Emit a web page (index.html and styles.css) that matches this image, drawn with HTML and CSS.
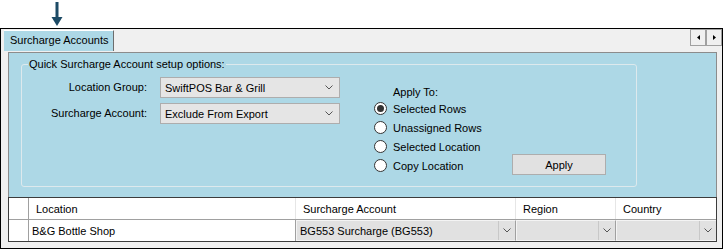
FILE: index.html
```html
<!DOCTYPE html>
<html lang="en">
<head>
    <meta charset="UTF-8">
    <meta name="viewport" content="width=device-width, initial-scale=1.0">
    <title>Surcharge Accounts</title>
    <link rel="stylesheet" href="styles.css">
</head>
<body>
    <div class="pointer">
        <svg width="14" height="28" viewBox="0 0 14 28">
            <rect x="5.5" y="2" width="3" height="17" fill="#1d4b66"/>
            <polygon points="1.5,17 12.5,17 7,26" fill="#1d4b66"/>
        </svg>
    </div>
    <div class="window">
        <div class="tabstrip">
            <div class="tab">Surcharge Accounts</div>
            <div class="scroll">
                <span class="scroll-btn"><svg width="3" height="5" viewBox="0 0 3 5"><polygon points="3,0 3,5 0,2.5" fill="#000"/></svg></span>
                <span class="scroll-btn"><svg width="3" height="5" viewBox="0 0 3 5"><polygon points="0,0 0,5 3,2.5" fill="#000"/></svg></span>
            </div>
        </div>
        <div class="page">
            <div class="panel">
                <fieldset class="options">
                    <legend>Quick Surcharge Account setup options:</legend>
                    <div class="fields">
                        <label>Location Group:</label>
                        <div class="combo"><span>SwiftPOS Bar &amp; Grill</span><svg width="8" height="5" viewBox="0 0 8 5"><polyline points="0.5,0.5 4,4 7.5,0.5" fill="none" stroke="#555"/></svg></div>
                        <label>Surcharge Account:</label>
                        <div class="combo"><span>Exclude From Export</span><svg width="8" height="5" viewBox="0 0 8 5"><polyline points="0.5,0.5 4,4 7.5,0.5" fill="none" stroke="#555"/></svg></div>
                    </div>
                    <div class="apply">
                        <div class="apply-to">
                            <div class="apply-title">Apply To:</div>
                            <div class="radio"><span class="dot on"></span>Selected Rows</div>
                            <div class="radio"><span class="dot"></span>Unassigned Rows</div>
                            <div class="radio"><span class="dot"></span>Selected Location</div>
                            <div class="radio"><span class="dot"></span>Copy Location</div>
                        </div>
                        <button class="apply-btn">Apply</button>
                    </div>
                </fieldset>
            </div>
            <div class="grid">
                <div class="grid-row grid-head">
                    <div class="cell rowhead"></div>
                    <div class="cell">Location</div>
                    <div class="cell">Surcharge Account</div>
                    <div class="cell">Region</div>
                    <div class="cell">Country</div>
                </div>
                <div class="grid-row">
                    <div class="cell rowhead"></div>
                    <div class="cell text">B&amp;G Bottle Shop</div>
                    <div class="cell pick"><span>BG553 Surcharge (BG553)</span><i class="drop"><svg width="8" height="5" viewBox="0 0 8 5"><polyline points="0.5,0.5 4,4 7.5,0.5" fill="none" stroke="#555"/></svg></i></div>
                    <div class="cell pick"><span></span><i class="drop"><svg width="8" height="5" viewBox="0 0 8 5"><polyline points="0.5,0.5 4,4 7.5,0.5" fill="none" stroke="#555"/></svg></i></div>
                    <div class="cell pick"><span></span><i class="drop"><svg width="8" height="5" viewBox="0 0 8 5"><polyline points="0.5,0.5 4,4 7.5,0.5" fill="none" stroke="#555"/></svg></i></div>
                </div>
            </div>
        </div>
    </div>
</body>
</html>
```

FILE: styles.css
```css
* {
    margin: 0;
    padding: 0;
    box-sizing: border-box;
}

body {
    font-family: "Liberation Sans", Arial, sans-serif;
    font-size: 11px;
    color: #000;
    background: #fff;
}

.pointer {
    height: 28px;
    padding-left: 50px;
}

.pointer svg {
    display: block;
}

.window {
    width: 723px;
    height: 221px;
    border: 1px solid #000;
    background: #f0f0f0;
}

.tabstrip {
    height: 23px;
    display: flex;
    justify-content: space-between;
    align-items: flex-start;
}

.tab {
    margin: 1px 0 0 3px;
    width: 110px;
    height: 21px;
    line-height: 18px;
    padding-left: 6px;
    background: #add8e6;
    border-top: 1px solid #fff;
    border-right: 1px solid #6d6d6d;
}

.scroll {
    display: flex;
}

.scroll-btn {
    width: 16px;
    height: 17px;
    border: 1px solid #a0a0a0;
    background: #f0f0f0;
    display: flex;
    align-items: center;
    justify-content: center;
}

.page {
    margin-left: 7px;
    width: 709px;
}

.panel {
    height: 145px;
    background: #add8e6;
    border: 1px solid #8c8c8c;
    border-bottom: none;
    padding: 4px 0 0 12px;
}

.options {
    width: 616px;
    height: 130px;
    border: 1px solid #dde9ed;
    border-radius: 3px;
    padding: 6px 0 0 0;
    display: flex;
    align-items: flex-start;
}

.options legend {
    margin-left: 6px;
    padding: 0 1px;
    line-height: 14px;
}

.fields {
    display: grid;
    grid-template-columns: 125px 180px;
    column-gap: 13px;
    row-gap: 5px;
}

.fields label {
    text-align: right;
    line-height: 21px;
}

.combo {
    height: 21px;
    border: 1px solid #adadad;
    background: #e5e5e5;
    display: flex;
    align-items: center;
    justify-content: space-between;
    padding: 0 6px 0 4px;
}

.apply {
    display: flex;
    align-items: flex-end;
    margin: 8px 0 0 34px;
}

.apply-to {
    width: 138px;
}

.apply-title {
    line-height: 14px;
    padding-left: 19px;
}

.radio {
    display: flex;
    align-items: center;
    gap: 6px;
    height: 19px;
}

.dot {
    width: 13px;
    height: 13px;
    border: 1px solid #333;
    border-radius: 50%;
    background: #fff;
    display: flex;
    align-items: center;
    justify-content: center;
}

.dot.on::after {
    content: "";
    width: 7px;
    height: 7px;
    border-radius: 50%;
    background: #333;
}

.apply-btn {
    width: 94px;
    height: 21px;
    border: 1px solid #adadad;
    background: #e1e1e1;
    font: inherit;
    color: #000;
}

.grid {
    border: 1px solid #3c3c3c;
    background: #fff;
}

.grid-row {
    display: grid;
    grid-template-columns: 20px 267px 220px 100px 1fr;
    height: 21px;
}

.grid-head {
    height: 22px;
    border-bottom: 1px solid #a0a0a0;
}

.cell {
    line-height: 21px;
    padding: 1px 0 0 7px;
    border-right: 1px solid #e6e6e6;
    white-space: nowrap;
    overflow: hidden;
}

.cell:last-child {
    border-right: none;
}

.rowhead {
    padding: 0;
    border-right: 1px solid #a0a0a0;
}

.text {
    padding-left: 3px;
    border-right: 1px solid #a0a0a0;
}

.pick {
    display: flex;
    justify-content: space-between;
    padding: 0 0 0 3px;
    background: #e1e1e1;
    border: 1px solid #f4f4f4;
    border-right: 1px solid #a0a0a0;
    line-height: 20px;
}

.drop {
    width: 17px;
    border-left: 1px solid #c8c8c8;
    display: flex;
    align-items: center;
    justify-content: center;
}
```
